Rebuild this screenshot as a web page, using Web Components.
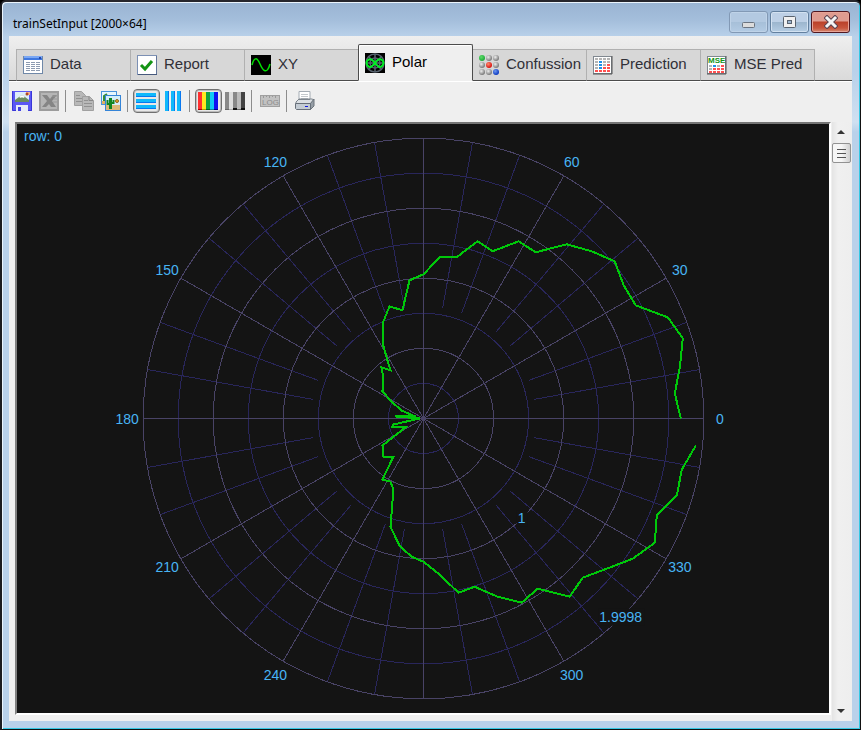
<!DOCTYPE html>
<html lang="en">
<head>
<meta charset="utf-8">
<title>trainSetInput</title>
<style>
  html, body { height: 100%; margin: 0; }
  body { font-family: "Liberation Sans", Arial, sans-serif; font-size: 15px; background: #000; overflow: hidden; }
</style>
</head>
<body>
<app-window>
  <title-bar slot="title">trainSetInput [2000×64]</title-bar>
  <tab-strip slot="tabs">
    <tab-item icon="data">Data</tab-item>
    <tab-item icon="report">Report</tab-item>
    <tab-item icon="xy">XY</tab-item>
    <tab-item icon="polar" selected>Polar</tab-item>
    <tab-item icon="confusion">Confussion</tab-item>
    <tab-item icon="prediction">Prediction</tab-item>
    <tab-item icon="mse">MSE Pred</tab-item>
  </tab-strip>
  <tool-bar slot="tools">
    <tool-button icon="save" label="Save image"></tool-button>
    <tool-button icon="excel" label="Export to Excel" disabled></tool-button>
    <tool-separator></tool-separator>
    <tool-button icon="copy" label="Copy data" disabled></tool-button>
    <tool-button icon="pictures" label="Copy image"></tool-button>
    <tool-separator></tool-separator>
    <tool-button icon="rows" label="Rows" pressed></tool-button>
    <tool-button icon="columns" label="Columns"></tool-button>
    <tool-separator></tool-separator>
    <tool-button icon="palette" label="Color palette" pressed></tool-button>
    <tool-button icon="grays" label="Gray palette"></tool-button>
    <tool-separator></tool-separator>
    <tool-button icon="log" label="Logarithmic scale" disabled></tool-button>
    <tool-separator></tool-separator>
    <tool-button icon="print" label="Print"></tool-button>
  </tool-bar>
  <polar-chart caption="row: 0"></polar-chart>
  <scroll-bar slot="scroll"></scroll-bar>
</app-window>

<script>
const grid9 = (colors, draw) => colors.map((c, i) => draw(c, i % 3, Math.floor(i / 3))).join('');
const cells = (rows, y0) => rows.map((row, r) => [...row].map((c, i) =>
  `<rect x="${2 + i * 4}" y="${y0 + r * 3}" width="3" height="2" fill="${{ g: '#b4b4b4', r: '#ff5050', b: '#1e90e8' }[c]}"/>`).join('')).join('');
const ball = (c, x, y) => `<circle cx="${3 + x * 7}" cy="${3 + y * 7}" r="3" fill="url(#${c})"/>`;
const radial = (id, light, dark) => `<radialGradient id="${id}" cx=".38" cy=".35" r=".65"><stop offset="0" stop-color="${light}"/><stop offset="1" stop-color="${dark}"/></radialGradient>`;

const ICONS = {
  data: `<rect x=".5" y="1.500" width="19" height="17" fill="#fff" stroke="#6f88a8"/><rect x="1" y="1" width="18" height="4" fill="#3f78e0"/><rect x="1" y="1" width="18" height="2" fill="#7ba8f4"/><rect x="16" y="2" width="2" height="2" fill="#2447a8"/><path d="M3 7.500h14M3 9.500h14M3 11.500h14M3 13.500h14M3 15.500h14" stroke="#8d9bb0" stroke-dasharray="4 1"/>`,
  report: `<rect x=".5" y=".5" width="19" height="19" fill="#fff" stroke="#7c90b4"/><path d="M1 19.500h19V1" fill="none" stroke="#46597c"/><path d="M4 10l4 4 7-8" fill="none" stroke="#149414" stroke-width="3"/>`,
  xy: `<rect width="20" height="20" fill="#000"/><path d="M1 10c2-8 5-8 8-1s7 11 10 0" fill="none" stroke="#00e000" stroke-width="1.500"/>`,
  polar: `<rect width="20" height="20" fill="#000"/><g fill="none" stroke="#56616d" stroke-width="1.500"><circle cx="10" cy="10" r="9"/><circle cx="10" cy="10" r="5"/><path d="M10 1v18M1 10h18M4 4l12 12M16 4L4 16"/></g><path d="M10 10C7 6 5 5.500 3 7s-2 4 0 6 4 1 7-3 5-4.500 7-3 2 4 0 6-4 1-7-3z" fill="none" stroke="#0e2" stroke-width="2"/>`,
  confusion: `<defs>${radial('g', '#eee', '#777')}${radial('n', '#5bdc68', '#20a83a')}${radial('r', '#ff8a70', '#d8100c')}${radial('b', '#6f98f0', '#0a38c0')}</defs>${grid9(['n','g','g','g','r','g','g','g','b'], ball)}`,
  prediction: `<rect x=".5" y="1.500" width="18" height="17" fill="#fff" stroke="#808890"/><path d="M0 19h19V1" fill="none" stroke="#555"/>${cells(['gggg','gbgg','gbgr','gbrr','rrrr'], 3)}`,
  mse: `<rect x=".5" y="1.500" width="18" height="17" fill="#fff" stroke="#808890"/><path d="M0 19h19V1" fill="none" stroke="#555"/><text x="1" y="8" font-size="8" font-weight="bold" fill="#149414">MSE</text>${cells(['gbgr','grrr','rrrr'], 10)}`,
  save: `<path d="M0 0h20v20H1l-1-1z" fill="#5b58f4"/><path d="M.5 0v19.500h19V0" fill="none" stroke="#3936d8"/><rect x="3" y="1" width="14" height="10" fill="#dcecf8"/><path d="M3 11V9l4-3 3-2 3 2 4 3v2z" fill="#6c8c60"/><path d="M7 6l3-2 3 2-2 1-1-1-1 1z" fill="#fff"/><path d="M14 1h4v3h-4z" fill="#f4b090"/><circle cx="15" cy="3" r="1.500" fill="#b04820"/><rect x="4" y="14" width="12" height="6" fill="#e8ecf8"/><rect x="6" y="16" width="3" height="4" fill="#4340e0"/>`,
  excel: `<rect x="0" y="0" width="20" height="20" fill="#9c9c9c"/><rect x="2" y="2" width="16" height="16" fill="#b5b5b5"/><path d="M3 4h5l3 4 3-4h4l-5 6 4 6h-5l-2-3-3 3H3l5-6z" fill="#858585"/><path d="M13 5h5M14 8h4M14 11h4" stroke="#999"/>`,
  copy: `<g fill="#b8b8b8" stroke="#a0a0a0"><path d="M.5.5h7l4 4v10H.5z"/><path d="M8.500 5.500h7l4 4v10h-11z"/></g><path d="M2 4.500h4M2 7.500h6M2 10.500h6M10 9.500h4M10 12.500h8M10 15.500h8" stroke="#919191"/><path d="M15 5.500v4h4" fill="none" stroke="#888"/>`,
  pictures: `<rect x=".5" y=".5" width="15" height="13" fill="#e6f5fc" stroke="#4994dc"/><path d="M1 10h4v3H1z" fill="#e0b060"/><path d="M3 10V5l3-2" stroke="#348c34" fill="none" stroke-width="2"/><rect x="4.500" y="4.500" width="15" height="15" fill="#d4eefa" stroke="#3484d8"/><rect x="5" y="14" width="14" height="5" fill="#dcb878"/><path d="M9.500 18V7" stroke="#108420" stroke-width="3"/><path d="M6.500 9v4h3M12.500 9v3h-3" fill="none" stroke="#108420" stroke-width="2"/><circle cx="16" cy="10" r="1.500" fill="#e8a820" stroke="#886020"/>`,
  rows: `<g fill="#10b8fa"><path d="M0 2h20v4H0zM0 8h20v4H0zM0 14h20v4H0z"/></g><path d="M0 5.500h20M0 11.500h20M0 17.500h20" stroke="#0878f0"/>`,
  columns: `<g fill="#10b8fa"><path d="M2 0h4v20H2zM8 0h4v20H8zM14 0h4v20h-4z"/></g><path d="M5.500 0v20M11.500 0v20M17.500 0v20" stroke="#0878f0"/>`,
  palette: `<path d="M0 1h4v17H0z" fill="#ff3030"/><path d="M4 1h4v17H4z" fill="#ffe820"/><path d="M8 1h4v17H8z" fill="#10a040"/><path d="M12 1h4v17h-4z" fill="#10c8f4"/><path d="M16 1h4v17h-4z" fill="#1010f0"/><path d="M0 18.500h4" stroke="#a00"/><path d="M4 18.500h4" stroke="#b0a000"/><path d="M8 18.500h4" stroke="#006020"/><path d="M12 18.500h4" stroke="#0884a0"/><path d="M16 18.500h4" stroke="#000090"/>`,
  grays: `<path d="M0 1h4v17H0z" fill="#888"/><path d="M4 1h4v17H4z" fill="#ddd"/><path d="M8 1h4v17H8z" fill="#888"/><path d="M12 1h4v17h-4z" fill="#bbb"/><path d="M16 1h4v17h-4z" fill="#444"/><path d="M0 18.500h4M12 18.500h4" stroke="#666"/><path d="M4 18.500h4" stroke="#aaa"/><path d="M8 18h4M16 18h4" stroke="#111" stroke-width="2"/>`,
  log: `<rect x=".5" y="4.500" width="19" height="11" fill="#c2c2c2" stroke="#a0a0a0"/><path d="M3.500 5v2M6.500 5v1M9.500 5v2M12.500 5v1M15.500 5v2" stroke="#999"/><text x="2" y="14" font-size="8" fill="#8c8c8c">LOG</text>`,
  print: `<path d="M4 9V.5h11V9z" fill="#fff" stroke="#a4acb4"/><path d="M6 3.500h7M6 5.500h7M6 7.500h7" stroke="#c4c8cc"/><path d="M1 11l3-3h13l2 1-4 4H1z" fill="#dce0e4" stroke="#7c848c"/><path d="M15 13l4-5v7l-4 4z" fill="#969ea6" stroke="#6c747c"/><path d="M.5 12.500h15v6h-14l-1-1z" fill="#c4ccd4" stroke="#68707a"/><path d="M4 8.500h11" stroke="#7c848c"/><path d="M10 15.500h3" stroke="#1018e0"/>`
};

function define(name, html, setup) {
  const template = document.createElement('template');
  template.innerHTML = html;
  customElements.define(name, class extends HTMLElement {
    constructor() {
      super();
      this.attachShadow({ mode: 'open' }).append(template.content.cloneNode(true));
    }
    connectedCallback() { if (setup) setup(this, this.shadowRoot); }
  });
}

define('app-window', `
  <style>
    :host { display: flex; flex-direction: column; box-sizing: border-box; height: 100vh;
      border: 1px solid #111; border-top: 2px solid #26262c; border-left: 2px solid #1c1c20; border-radius: 6px 6px 0 0; padding: 0 7px 7px;
      background: linear-gradient(#99b4d2, #a4bedb 18px, #b9d1ea 35px, #b9d1ea 70px, #cfe0f1 120px, #b9d1ea 130px);
      box-shadow: inset 1px 1px #eaf4fc, inset -1px -1px #35c8e4; }
    main { display: flex; flex-direction: column; flex: 1; min-height: 0; background: #efefef; margin-right: 1px; margin-bottom: 1px; }
    .work { display: flex; flex: 1; min-height: 0; }
    .view { flex: 1; min-width: 0; display: flex; margin: 0 1px 6px 6px; border: 2px solid #fff; border-top-color: #757575; border-left-color: #808080; background: #141414; }
  </style>
  <slot name="title"></slot>
  <main>
    <slot name="tabs"></slot>
    <slot name="tools"></slot>
    <div class="work"><div class="view"><slot></slot></div><slot name="scroll"></slot></div>
  </main>`);

define('title-bar', `
  <style>
    :host { display: flex; align-items: center; height: 34px; flex: none; padding: 0 3px 0 4px;
      font: 12px/20px "Noto Sans", sans-serif; color: #000; }
    .name { flex: 1; padding-top: 10px; }
    .buttons { display: flex; gap: 2px; padding-top: 6px; }
    button { display: grid; place-items: center; box-sizing: border-box; width: 39px; height: 22px; padding: 0; border-radius: 3px;
      border: 1px solid #63809f; box-shadow: inset 0 0 0 1px #d3e2f1;
      background: linear-gradient(#bdd0e6 48%, #9bb5cd 50%, #b5cde4); }
    .min { border-color: #8299b5; background: linear-gradient(#b3c9e1 48%, #a6bfd8 50%, #b3cbe4); box-shadow: inset 0 0 0 1px #bfd3e8; }
    .close { border-color: #501820; box-shadow: inset 0 0 0 1px #e7a497; background: linear-gradient(#df9c90 45%, #ba4129 50%, #c8563d 80%, #d48a72); }
    svg { display: block; }
  </style>
  <span class="name"><slot></slot></span>
  <div class="buttons">
    <button class="min" aria-label="Minimize"><svg width="14" height="14"><rect x=".5" y="7.500" width="12" height="5" rx="1" fill="#dcdcdc" stroke="#6b7480"/></svg></button>
    <button aria-label="Maximize"><svg width="14" height="14"><rect x=".5" y="1.500" width="12" height="11" rx="1" fill="#f0f0f0" stroke="#59636f"/><rect x="4.500" y="5.500" width="4" height="3" fill="#9cb5cf" stroke="#59636f"/></svg></button>
    <button class="close" aria-label="Close"><svg width="14" height="14"><path d="M3 3l8 8M11 3l-8 8" stroke="#5c4450" stroke-width="5" stroke-linecap="square"/><path d="M3 3l8 8M11 3l-8 8" stroke="#f4f4f4" stroke-width="3" stroke-linecap="square"/></svg></button>
  </div>`);

define('tab-strip', `
  <style>
    :host { display: flex; align-items: flex-end; flex: none; height: 45px; padding-left: 7px; box-sizing: border-box;
      background: linear-gradient(#efefef, #d9d9d9); box-shadow: inset 0 -1px #4c4c4c; }
  </style>
  <slot></slot>`, host => host.setAttribute('role', 'tablist'));

define('tab-item', `
  <style>
    :host { display: block; flex: 0 1 114px; min-width: 0; }
    button { display: flex; align-items: center; gap: 7px; width: 100%; height: 32px; box-sizing: border-box; margin: 0; padding: 0 6px;
      border: solid #b0b0b0; border-width: 1px 0 0 1px; border-bottom: 1px solid #4c4c4c; background: #d7d7d7;
      font: inherit; line-height: 20px; color: #303038; white-space: nowrap; text-align: left; }
    span { padding-bottom: 2px; }
    :host(:last-of-type) { flex-basis: 115px; }
    :host(:last-of-type) button { border-right-width: 1px; }
    :host([selected]) { flex-basis: 115px; margin-right: -1px; z-index: 1; }
    :host([selected]) button { height: 37px; border-color: #4c4c4c; border-right-width: 1px; border-bottom-color: #efefef; border-radius: 2px 2px 0 0; background: #efefef; color: #000; box-shadow: inset 1px 1px #fff; }
  </style>
  <button role="tab"><ui-icon></ui-icon><span><slot></slot></span></button>`,
  (host, root) => {
    root.querySelector('ui-icon').setAttribute('name', host.getAttribute('icon'));
    root.querySelector('button').setAttribute('aria-selected', host.hasAttribute('selected'));
  });

define('tool-bar', `
  <style>:host { display: flex; align-items: center; flex: none; height: 41px; box-sizing: border-box; border-top: 1px solid #fff; padding-bottom: 2px; }</style>
  <slot></slot>`, host => host.setAttribute('role', 'toolbar'));

define('tool-separator', `
  <style>:host { width: 1px; height: 22px; margin: 0 5px 0 2px; background: #8c8c8c; }</style>`);

define('tool-button', `
  <style>
    :host { display: block; }
    button { display: grid; place-items: center; width: 27px; height: 24px; padding: 0 1px 0 0; box-sizing: border-box; border: 0; background: none; }
    :host([pressed]) button { border: 1px solid #707070; border-radius: 4px; background: #e8e8e8; box-shadow: inset 0 0 0 1px #bcbcbc; }
  </style>
  <button><ui-icon></ui-icon></button>`,
  (host, root) => {
    const button = root.querySelector('button');
    root.querySelector('ui-icon').setAttribute('name', host.getAttribute('icon'));
    button.setAttribute('aria-label', host.getAttribute('label'));
    button.disabled = host.hasAttribute('disabled');
    if (host.hasAttribute('pressed')) button.setAttribute('aria-pressed', 'true');
  });

define('scroll-bar', `
  <style>
    :host { display: flex; flex-direction: column; flex: none; width: 20px; background: linear-gradient(90deg, #e4e4e4, #f0f0f0 6px, #eee); }
    button { display: grid; place-items: center; width: 20px; height: 20px; padding: 0 2px 0 0; border: 0; background: none; }
    .thumb { box-sizing: border-box; width: 19px; height: 20px; margin: 1px 0 auto; border: 1px solid #929292; border-radius: 2px;
      background: linear-gradient(90deg, #f6f6f6 50%, #d0d0d0); display: grid; place-items: center; }
    svg { display: block; }
  </style>
  <button aria-label="Scroll up"><svg width="10" height="6"><path d="M5 1l4 4H1z" fill="#333"/></svg></button>
  <div class="thumb"><svg width="9" height="9"><path d="M0 .5h9M0 4.500h9M0 8.500h9" stroke="#555"/></svg></div>
  <button aria-label="Scroll down"><svg width="10" height="6"><path d="M1 1h8L5 5z" fill="#333"/></svg></button>`,
  host => host.setAttribute('role', 'group'));

const SERIES = [
  [257,0],[251,-25],[256,-51],[259,-80],[244,-101],[212,-113],[200,-133],[191,-157],[168,-167],[143,-174],[112,-166],
  [95,-177],[69,-167],[54,-177],[33,-161],[16,-161],[0,-144],[-14,-138],[-21,-108],[-34,-112],[-40,-97],[-40,-72],
  [-33,-48],[-42,-51],[-40,-41],[-41,-27],[-32,-17],[-22,-8],[-8,-2],[-28,-2],[-4,0],[-30,6],[-31,8],[-17,8],
  [-41,27],[-40,38],[-30,38],[-41,61],[-33,63],[-30,71],[-33,108],[-24,127],[-12,138],[0,143],[15,155],[35,174],[51,168],
  [74,178],[98,184],[114,170],[146,178],[159,159],[183,150],[209,140],[231,124],[233,97],[253,77],[258,51],[272,27]
];

define('polar-chart', `
  <style>
    :host { display: grid; flex: 1; min-width: 0; min-height: 0; background: #141414; }
    .caption { grid-area: 1 / 1; place-self: start; padding: 3px 7px; line-height: 18px; font-size: 14px; color: #48b4f4; }
    svg { grid-area: 1 / 1; width: 100%; height: 100%; min-height: 0; display: block; }
    .grid { fill: none; stroke-width: 1; shape-rendering: crispEdges; }
    .major { stroke: #494366; }
    .minor { stroke: #29265b; }
    .series { fill: none; stroke: #00c80a; stroke-width: 2; shape-rendering: crispEdges; }
    text { font-size: 14px; fill: #48b4f4; text-anchor: middle; }
  </style>
  <svg viewBox="-406 -294 811 588" role="img" aria-label="Polar plot"></svg>
  <div class="caption"></div>`,
  (host, root) => {
    const at = (angle, r) => {
      const a = angle * Math.PI / 180;
      return Math.round(r * Math.cos(a)) + ' ' + Math.round(-r * Math.sin(a));
    };
    let minor = '', major = '', labels = '';
    for (let r = 35; r <= 280; r += 35) {
      const ring = `<circle r="${r}"/>`;
      if (r % 70) minor += ring; else major += ring;
    }
    for (let a = 0; a < 360; a += 10) {
      if (a % 30) minor += `<path d="M${at(a, 112)}L${at(a, 280)}"/>`;
      else {
        major += `<path d="M0 0L${at(a, 280)}"/>`;
        if (a % 180 !== 90) {
          const [x, y] = at(a, 296).split(' ').map(Number);
          labels += `<text x="${x}" y="${y + 5}">${a}</text>`;
        }
      }
    }
    root.querySelector('svg').innerHTML = `
      <g class="grid minor">${minor}</g><g class="grid major">${major}</g>
      <rect x="93" y="92" width="11" height="16" fill="#141414"/>
      <rect x="175" y="190" width="46" height="17" fill="#141414"/>
      <polyline class="series" points="${SERIES.map(p => p.join()).join(' ')}"/>
      ${labels}<text x="98" y="104">1</text><text x="197" y="203">1.9998</text>`;
    root.querySelector('.caption').textContent = host.getAttribute('caption');
  });

// Registered last, so the name is already set when each icon is drawn.
define('ui-icon', `
  <style>:host { display: block; width: 20px; height: 20px; flex: none; } svg { display: block; font-family: "Liberation Sans", Arial, sans-serif; }</style>
  <svg width="20" height="20" viewBox="0 0 20 20" aria-hidden="true"></svg>`,
  (host, root) => { root.querySelector('svg').innerHTML = ICONS[host.getAttribute('name')]; });
</script>
</body>
</html>
